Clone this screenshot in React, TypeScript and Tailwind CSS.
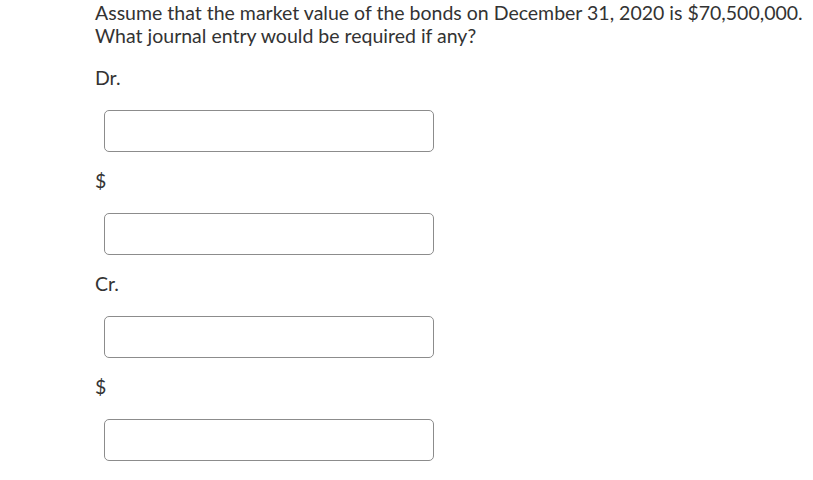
import React from 'react';

const entries = ['Dr.', '$', 'Cr.', '$'];

function Field() {
  return <div className="ml-[9px] mt-[21px] h-[42px] w-[330px] rounded-[5px] border border-[#8c8c8c] bg-white" />;
}

export default function App() {
  return (
    <div
      className="min-h-[480px] w-[813px] bg-white pl-[95px] pt-[1px] text-[19.5px] leading-[23px] text-[#333333]"
      style={{ fontFamily: 'Lato, "Open Sans", sans-serif' }}
    >
      <p>Assume that the market value of the bonds on December 31, 2020 is $70,500,000.</p>
      <p>What journal entry would be required if any?</p>
      <div className="mt-[19px] flex flex-col">
        {entries.map((label, i) => (
          <div key={i} className={i > 0 ? 'mt-[17px]' : ''}>
            <div className="h-[23px]">{label}</div>
            <Field />
          </div>
        ))}
      </div>
    </div>
  );
}
